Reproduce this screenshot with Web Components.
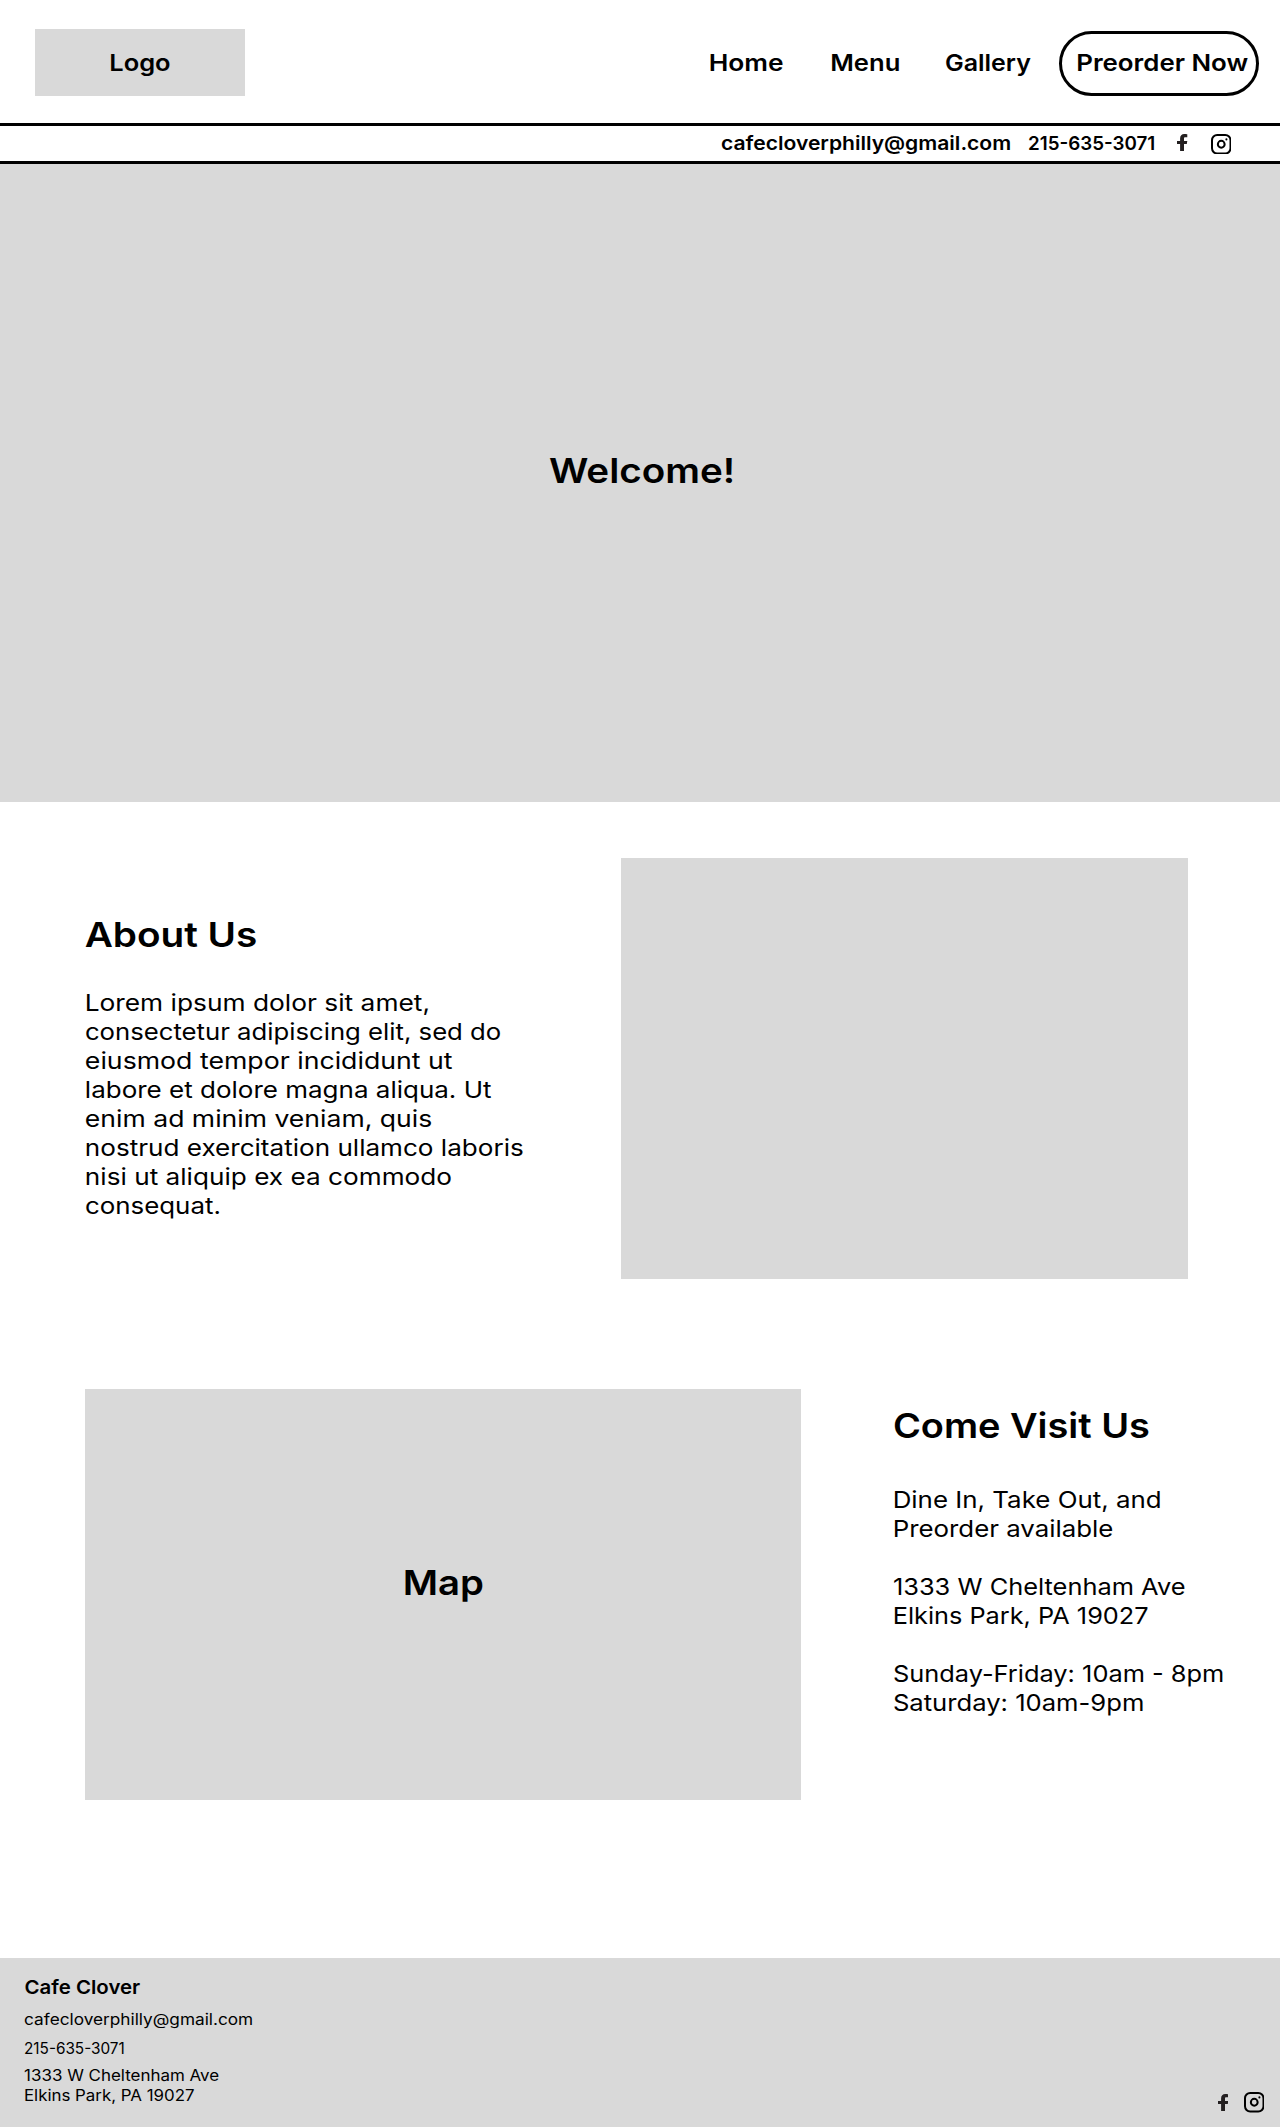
<!DOCTYPE html>
<html lang="en">
<head>
<meta charset="utf-8">
<title>Cafe Clover</title>
<style>
  body { margin: 0; background: #fff; color: #000; font-family: Inter, "Open Sans", sans-serif; }
</style>
</head>
<body>
<cafe-page></cafe-page>
<script>
const define = (name, html, ready) => {
  const template = document.createElement('template');
  template.innerHTML = html;
  customElements.define(name, class extends HTMLElement {
    connectedCallback() {
      if (this.shadowRoot) return;
      this.attachShadow({ mode: 'open' }).append(template.content.cloneNode(true));
      if (ready) ready(this);
    }
  });
};

/* One line of text whose ink spans exactly the given width; nudge evens out the side bearing. */
const sizes = { s: [15.4, 19], m: [19.25, 24], l: [23.1, 28], xl: [34.65, 42] };
const pen = document.createElement('canvas').getContext('2d');
define('fit-text', `
  <style>
    :host { display: block; flex: none; white-space: nowrap; }
    span { display: inline-block; transform-origin: 0 0; vertical-align: top; }
  </style><span><slot></slot></span>`, el => {
  const [size, line] = sizes[el.getAttribute('size') || 'l'];
  const weight = el.hasAttribute('strong') ? 575 : 400;
  const width = +el.getAttribute('width');
  const nudge = +(el.getAttribute('nudge') || 0);
  el.style.cssText = `font-size:${size}px;line-height:${el.getAttribute('line') || line}px;height:${el.getAttribute('line') || line}px;font-weight:${weight};width:${width}px`;
  pen.font = `${weight} ${size}px Inter, "Open Sans", sans-serif`;
  const m = pen.measureText(el.textContent);
  const ink = m.actualBoundingBoxLeft + m.actualBoundingBoxRight;
  el.shadowRoot.querySelector('span').style.transform =
    `scaleX(${width / ink}) translateX(${m.actualBoundingBoxLeft + nudge}px)`;
});

define('icon-facebook', `
  <style>:host { display: block; flex: none; width: 10.4px; height: 17.3px; } svg { display: block; }</style>
  <svg width="10.4" height="17.3" viewBox="0 0 10.4 17.3"><path fill="#231f20" d="M10.3.2v3H8.4C7.3 3.2 7 3.7 7 4.6v2.3h3.3l-.5 3H7v7.4H3.1V9.9H0v-3h3.1V4.4C3.1 1.6 4.7 0 7.3 0c1.2 0 2.4.1 3 .2z"/></svg>`);

define('icon-instagram', `
  <style>:host { display: block; flex: none; width: 20.5px; height: 20.5px; } svg { display: block; }</style>
  <svg width="20.5" height="20.5" viewBox="0 0 20.5 20.5" fill="none" stroke="#000" stroke-width="2">
    <rect x="1" y="1" width="18.5" height="18.5" rx="5.2"/>
    <circle cx="10.25" cy="10.25" r="3.4"/>
    <circle cx="15.4" cy="5.4" r="1.05" fill="#000" stroke="none"/>
  </svg>`);

define('site-header', `
  <style>
    :host { display: flex; align-items: flex-start; height: 123px; border-bottom: 3px solid #000; }
    .logo { margin: 29px 0 0 35px; width: 134px; height: 47px; padding: 20px 0 0 76px; background: #d9d9d9; }
    nav { display: flex; align-items: flex-start; margin-left: auto; padding: 31px 21px 0 0; }
    nav > fit-text { margin-top: 18px; }
    .menu { margin-left: 48.7px; }
    .gallery { margin-left: 46.3px; }
    .pill { box-sizing: border-box; width: 200px; height: 65px; margin-left: 28px; padding: 15px 0 0 16px; border: 3px solid #000; border-radius: 33px; }
  </style>
  <div class="logo"><fit-text strong nudge="-.6" width="60.2">Logo</fit-text></div>
  <nav>
    <fit-text strong nudge="-.2" width="73">Home</fit-text>
    <fit-text class="menu" strong nudge="-.6" width="67.7">Menu</fit-text>
    <fit-text class="gallery" strong width="85.3">Gallery</fit-text>
    <div class="pill"><fit-text strong nudge="-.6" width="170.4">Preorder Now</fit-text></div>
  </nav>`);

define('contact-bar', `
  <style>
    :host { display: flex; justify-content: flex-end; align-items: flex-start; box-sizing: border-box; height: 38px; padding: 5px 48.7px 0 0; border-bottom: 3px solid #000; }
    .phone { margin: 0 22.5px 0 18.3px; }
    icon-facebook { margin: 2.7px 23.3px 0 0; }
    icon-instagram { margin-top: 2.7px; }
  </style>
  <fit-text size="m" strong width="289.8">cafecloverphilly@gmail.com</fit-text>
  <fit-text class="phone" size="m" strong width="125.2">215-635-3071</fit-text>
  <icon-facebook></icon-facebook><icon-instagram></icon-instagram>`);

define('hero-banner', `
  <style>:host { display: flex; box-sizing: border-box; height: 638px; padding: 285px 0 0 550px; background: #d9d9d9; }</style>
  <fit-text size="xl" strong nudge="-1" width="184">Welcome!</fit-text>`);

define('about-section', `
  <style>
    :host { display: flex; justify-content: space-between; padding: 56px 92px 0 85.5px; }
    .copy { padding-top: 55px; }
    .body { padding: 34px 0 0 .5px; }
    .photo { width: 567px; height: 421px; background: #d9d9d9; }
  </style>
  <div class="copy">
    <fit-text size="xl" strong nudge="-1.2" width="171.5">About Us</fit-text>
    <div class="body">
      <fit-text line="29" nudge=".8" width="341.2">Lorem ipsum dolor sit amet,</fit-text>
      <fit-text line="29" width="414.3">consectetur adipiscing elit, sed do</fit-text>
      <fit-text line="29" width="367">eiusmod tempor incididunt ut</fit-text>
      <fit-text line="29" width="406">labore et dolore magna aliqua. Ut</fit-text>
      <fit-text line="29" width="346">enim ad minim veniam, quis</fit-text>
      <fit-text line="29" width="437.5">nostrud exercitation ullamco laboris</fit-text>
      <fit-text line="29" width="365">nisi ut aliquip ex ea commodo</fit-text>
      <fit-text line="29" width="133">consequat.</fit-text>
    </div>
  </div>
  <div class="photo"></div>`);

define('visit-section', `
  <style>
    :host { display: flex; gap: 93.3px; padding: 110px 0 158px 85px; }
    .map { box-sizing: border-box; width: 716px; height: 411px; padding: 172px 0 0 320.4px; background: #d9d9d9; }
    .copy { padding-top: 15px; }
    .body { display: flex; flex-direction: column; gap: 29px; padding-top: 40px; }
  </style>
  <div class="map"><fit-text size="xl" strong width="78.3">Map</fit-text></div>
  <div class="copy">
    <fit-text size="xl" strong width="254.8">Come Visit Us</fit-text>
    <div class="body">
      <div>
        <fit-text line="29" nudge=".8" width="265.5">Dine In, Take Out, and</fit-text>
        <fit-text line="29" nudge=".8" width="218">Preorder available</fit-text>
      </div>
      <div>
        <fit-text line="29" width="291">1333 W Cheltenham Ave</fit-text>
        <fit-text line="29" nudge=".8" width="252.5">Elkins Park, PA 19027</fit-text>
      </div>
      <div>
        <fit-text line="29" width="329">Sunday-Friday: 10am - 8pm</fit-text>
        <fit-text line="29" width="249">Saturday: 10am-9pm</fit-text>
      </div>
    </div>
  </div>`);

define('site-footer', `
  <style>
    :host { display: flex; justify-content: space-between; box-sizing: border-box; height: 169px; padding: 17px 15.7px 0 24.5px; background: #d9d9d9; }
    .email { margin-top: 11px; }
    .phone { margin: 10px 0 8px; }
    .city { margin-top: 1px; }
    .social { display: flex; align-items: flex-start; padding-top: 117px; gap: 15.6px; }
    icon-facebook { margin-top: 1.5px; }
  </style>
  <div>
    <fit-text size="m" strong nudge="-.4" width="116">Cafe Clover</fit-text>
    <fit-text class="email" size="s" nudge="-.8" width="228.5">cafecloverphilly@gmail.com</fit-text>
    <fit-text class="phone" size="s" width="98.5">215-635-3071</fit-text>
    <fit-text size="s" nudge="-.8" width="195">1333 W Cheltenham Ave</fit-text>
    <fit-text class="city" size="s" width="168.7">Elkins Park, PA 19027</fit-text>
  </div>
  <div class="social"><icon-facebook></icon-facebook><icon-instagram></icon-instagram></div>`);

define('cafe-page', `
  <style>:host { display: block; width: 1280px; height: 2127px; overflow: hidden; }</style>
  <site-header></site-header>
  <contact-bar></contact-bar>
  <hero-banner></hero-banner>
  <about-section></about-section>
  <visit-section></visit-section>
  <site-footer></site-footer>`);
</script>
</body>
</html>
